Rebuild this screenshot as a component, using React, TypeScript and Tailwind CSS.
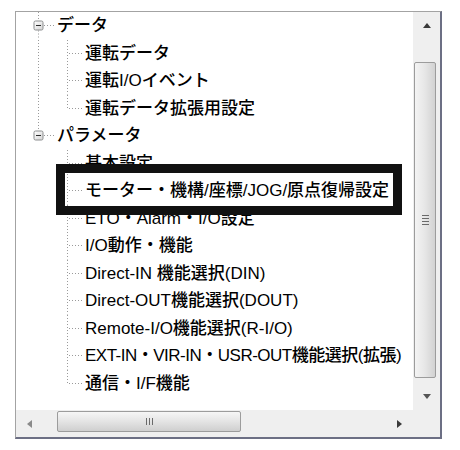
import React from "react";

const tree = [
  {
    label: "データ",
    children: ["運転データ", "運転I/Oイベント", "運転データ拡張用設定"],
  },
  {
    label: "パラメータ",
    children: [
      "基本設定",
      "モーター・機構/座標/JOG/原点復帰設定",
      "ETO・Alarm・I/O設定",
      "I/O動作・機能",
      "Direct-IN 機能選択(DIN)",
      "Direct-OUT機能選択(DOUT)",
      "Remote-I/O機能選択(R-I/O)",
      "EXT-IN・VIR-IN・USR-OUT機能選択(拡張)",
      "通信・I/F機能",
    ],
  },
];

const H = 27.5;
const CY = 13.5;
const dot = { stroke: "#9a9a9a", strokeWidth: 1, strokeDasharray: "1 2" };

// expander + dotted connectors for a top level node
const RootGutter = ({ last }: { last: boolean }) => (
  <svg width="41" height={H} className="shrink-0">
    <defs>
      <linearGradient id="box" x1="0" y1="0" x2="1" y2="1">
        <stop offset="0" stopColor="#ffffff" />
        <stop offset="1" stopColor="#d4d4d4" />
      </linearGradient>
    </defs>
    <line x1="22.5" y1="0" x2="22.5" y2={CY - 5} {...dot} />
    {!last && <line x1="22.5" y1={CY + 5} x2="22.5" y2={H} {...dot} />}
    <rect x="18" y={CY - 4.5} width="9" height="9" rx="1.5" fill="url(#box)" stroke="#8c8e8f" />
    <line x1="20" y1={CY} x2="25" y2={CY} stroke="#2a2a2a" strokeWidth="1" />
    <line x1="28" y1={CY} x2="40" y2={CY} {...dot} />
  </svg>
);

const ChildGutter = ({ parentLast, last }: { parentLast: boolean; last: boolean }) => (
  <svg width="69" height={H} className="shrink-0">
    {!parentLast && <line x1="22.5" y1="0" x2="22.5" y2={H} {...dot} />}
    <line x1="51.5" y1="0" x2="51.5" y2={last ? CY : H} {...dot} />
    <line x1="53" y1={CY} x2="66" y2={CY} {...dot} />
  </svg>
);

const Arrow = ({ dir, color = "#3a3a3a" }: { dir: "up" | "down" | "left" | "right"; color?: string }) => {
  const pts = {
    up: "0,5 4,0 8,5",
    down: "0,0 8,0 4,5",
    left: "5,0 5,8 0,4",
    right: "0,0 5,4 0,8",
  }[dir];
  const vertical = dir === "up" || dir === "down";
  return (
    <svg width={vertical ? 8 : 5} height={vertical ? 5 : 8}>
      <polygon points={pts} fill={color} />
    </svg>
  );
};

export default function App() {
  return (
    <div className="relative w-[460px] h-[450px] bg-white pt-[11px] pl-[15px] font-['Liberation_Sans','Noto_Sans_CJK_JP',sans-serif]">
      <div className="w-[427px] h-[428px] flex flex-col border-l border-t border-l-[#a3a3a3] border-t-[#a3a3a3] border-r-2 border-b-2 border-r-[#6c6f84] border-b-[#6c6f84]">
        <div className="flex h-[398px]">
          {/* tree */}
          <div className="flex-1 bg-white overflow-hidden">
            {tree.map((node, ri) => {
              const rootLast = ri === tree.length - 1;
              return (
                <div key={node.label}>
                  <div className="flex items-center h-[27.5px]">
                    <RootGutter last={rootLast} />
                    <span className="text-[17px] font-medium text-black whitespace-nowrap">{node.label}</span>
                  </div>
                  {node.children.map((c, ci) => (
                    <div key={c} className="flex items-center h-[27.5px]">
                      <ChildGutter parentLast={rootLast} last={ci === node.children.length - 1} />
                      <span
                        className={
                          c.startsWith("EXT")
                            ? "text-[17px] font-medium text-black whitespace-nowrap tracking-[-0.5px]"
                            : "text-[17px] font-medium text-black whitespace-nowrap"
                        }
                      >
                        {c}
                      </span>
                    </div>
                  ))}
                </div>
              );
            })}
          </div>
          {/* vertical scrollbar */}
          <div className="w-[27px] flex flex-col bg-[#efefef]">
            <div className="h-[27px] flex items-center justify-center">
              <Arrow dir="up" />
            </div>
            <div className="flex-1 pt-[23px] pb-[5px]">
              <div className="ml-[1px] w-[22px] h-full rounded-[2px] border border-[#9c9c9c] bg-gradient-to-r from-[#f4f4f4] via-[#e6e6e6] to-[#d2d2d2] flex flex-col items-center justify-center gap-[2px]">
                <div className="w-[7px] h-px bg-[#6a6a6a]" />
                <div className="w-[7px] h-px bg-[#6a6a6a]" />
                <div className="w-[7px] h-px bg-[#6a6a6a]" />
                <div className="w-[7px] h-px bg-[#6a6a6a]" />
              </div>
            </div>
            <div className="h-[27px] flex items-center justify-center">
              <Arrow dir="down" color="#555" />
            </div>
          </div>
        </div>
        {/* horizontal scrollbar */}
        <div className="flex h-[27px] bg-[#efefef]">
          <div className="w-[27px] flex items-center justify-center">
            <Arrow dir="left" color="#8a8a8a" />
          </div>
          <div className="flex-1 pl-[14px] pt-[1px] pb-[5px]">
            <div className="w-[184px] h-full rounded-[2px] border border-[#9c9c9c] bg-gradient-to-b from-[#f6f6f6] via-[#e4e4e4] to-[#cfcfcf] flex items-center justify-center gap-[2px]">
              <div className="w-px h-[7px] bg-[#6a6a6a]" />
              <div className="w-px h-[7px] bg-[#6a6a6a]" />
              <div className="w-px h-[7px] bg-[#6a6a6a]" />
            </div>
          </div>
          <div className="w-[27px] flex items-center justify-center">
            <Arrow dir="right" />
          </div>
          <div className="w-[27px] bg-[#efefef]" />
        </div>
      </div>
      {/* highlight frame drawn over the tree */}
      <div className="absolute left-[56px] top-[164px] w-[346px] h-[51px] border-[9px] border-[#111]" />
    </div>
  );
}
